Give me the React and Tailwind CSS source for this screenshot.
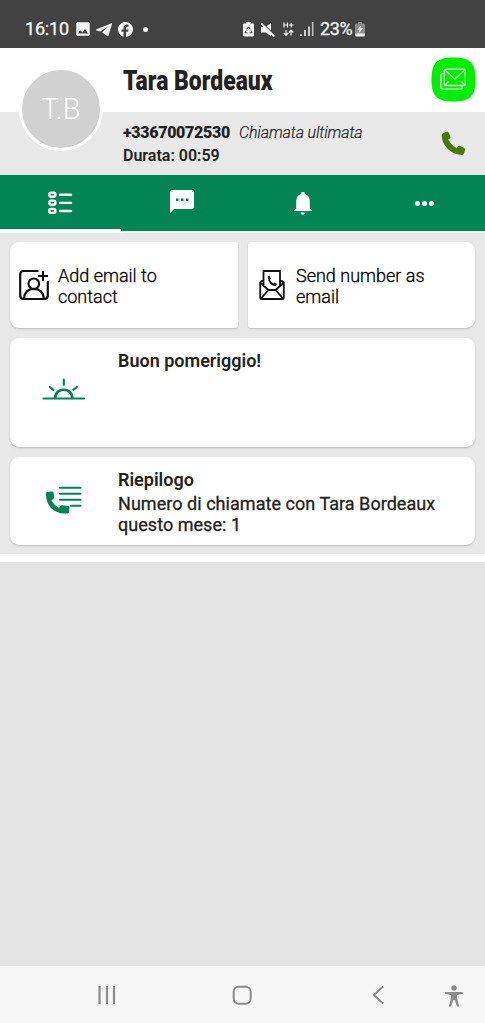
import { MdImage } from "react-icons/md";

function StatusBar() {
  return (
    <div className="flex h-12 items-start bg-[#424242] text-[18px] leading-[18px] text-[#f3f3f3]">
      <span className="mt-5 ml-[25px] w-[44px] tracking-[-0.2px] whitespace-nowrap [-webkit-text-stroke:0.3px]">16:10</span>
      <MdImage className="mt-[20px] ml-[5px] size-[18px]" />
      <svg className="mt-[23px] ml-[4px] h-[14px] w-[16px]" viewBox="0 0 16 14" fill="currentColor">
        <path d="M15.500.2.5 6.300c-.7.300-.6.900 0 1.100l3.800 1.200L12.600 3 6.300 9.200l-.1.200 4.900 3.700c.7.500 1.300.2 1.500-.6L16 .9c.1-.6-.1-.9-.5-.7Z" />
      </svg>
      <svg className="mt-[22px] ml-[6px] size-[15px]" viewBox="0 0 24 24" fill="currentColor">
        <path d="M24 12a12 12 0 1 0-15.200 11.500v-8H5.700V12h3.100V9.800c0-3.700 2.200-5.700 5.400-5.700 1.100 0 2.700.3 2.700.3v3h-1.700c-2 0-2.300 1-2.300 2.200V12h3.800l-.6 3.500h-3.200v8.400A12 12 0 0 0 24 12Z" />
      </svg>
      <span className="mt-[27px] ml-[10px] size-[5px] rounded-full bg-current" />
      <svg className="mt-[22px] ml-[95px] h-[15px] w-[11px]" viewBox="0 0 11 15">
        <path d="M3 0h5v1.600h2q1 0 1 1V13q0 1.600-1.600 1.600H1.600Q0 14.600 0 13V2.600q0-1 1-1h2Z" fill="currentColor" />
        <path d="m3.600 7.300 1.900-2.500 1.900 2.500M8 8.500l1 2.300H6.500M4.500 10.800H2l1-2.300" fill="none" stroke="#424242" strokeWidth="1" />
      </svg>
      <svg className="mt-[23px] ml-[7px] size-[14px]" viewBox="0 0 14 14">
        <path d="M0 4h4.500L10 0v13L4.500 9.500H0Z" fill="currentColor" />
        <path d="m1.500 0 13 13" stroke="#424242" strokeWidth="1.300" />
        <path d="m.3.500 13 13" stroke="currentColor" strokeWidth="1.900" />
      </svg>
      <svg className="mt-[22px] ml-[8px] h-[15px] w-[11px]" viewBox="0 0 11 15" fill="none" stroke="currentColor" strokeWidth="1.200">
        <path d="M1 .5v5M4.500.5v5M1 3h3.500M6 3h4.500M8.200.8v4.400M3 8v5M.8 11 3 13.300 5.200 11M8 13.500V8.300M5.800 10.500 8 8.200l2.300 2.300" />
      </svg>
      <svg className="mt-[22px] ml-[6px] h-[14px] w-[14px]" viewBox="0 0 14 14" stroke="currentColor" strokeWidth="1.600">
        <path d="M1 12.200V14M5 8v6M9 4.500V14" />
        <path d="M12.700 0v14" opacity=".7" />
      </svg>
      <span className="mt-5 ml-[6px] w-[33px] tracking-[-0.4px] whitespace-nowrap [-webkit-text-stroke:0.3px]">23%</span>
      <svg className="mt-[22px] ml-[2px] h-[15px] w-[10px]" viewBox="0 0 10 15">
        <path d="M3 0h4v1.500h1.500q1.500 0 1.500 1.500V12H0V3q0-1.500 1.500-1.500H3Z" fill="#8b8b8b" />
        <path d="M0 11.500h10V13q0 1.500-1.500 1.500h-7Q0 14.500 0 13ZM5.700 3.500 2 8.300h2.300L4 11l4-4.800H5.500Z" fill="currentColor" />
      </svg>
    </div>
  );
}

function Header() {
  return (
    <header className="relative">
      <div className="flex h-16 justify-between bg-white pr-[9px] pl-[123px]">
        <h1 className="mt-[17px] origin-left scale-x-[0.85] text-[27px] leading-8 font-black whitespace-nowrap">
          Tara Bordeaux
        </h1>
        <svg className="mt-[9px] h-[45px] w-[45px]" viewBox="0 0 45 45" fill="none">
          <path d="M22.500.5C39 .5 44.500 6 44.500 22.500S39 44.500 22.500 44.500.5 39 .5 22.500 6 .5 22.500.5Z" fill="#00ee00" />
          <g stroke="#c9ffc9" strokeWidth="1.400" strokeLinejoin="round">
            <rect x="13.300" y="12.300" width="21" height="16.200" rx="1.500" />
            <path d="m13.800 13 10 9 10-9M14 28l3.500-3.500M33.800 28l-3.500-3.500M13.300 16.500h-1.500q-2 0-2 2V30q0 2.200 2.200 2.200h17q2 0 2-2v-1.600" />
          </g>
        </svg>
      </div>
      <div className="flex h-[63px] justify-between bg-[#e8e8e8] pt-[9px] pr-[19px] pl-[123px]">
        <div className="text-[16px] leading-[23px] whitespace-nowrap">
          <div className="flex">
            <span className="w-[116px] font-black tracking-[-0.3px]">+33670072530</span>
            <span className="font-light tracking-[-0.12px] italic [-webkit-text-stroke:0.2px]">Chiamata ultimata</span>
          </div>
          <div className="font-semibold">Durata: 00:59</div>
        </div>
        <svg className="mt-[10px] h-[25px] w-[25px]" viewBox="0 0 25 25" fill="#4b780c">
          <path d="M2 2.200 5.500.7q1.400-.5 2.100.8l1.800 3.700q.5 1.200-.4 2L7.200 8.800q2.700 5 8.100 8.300l1.700-1.700q1-.9 2.200-.3l4 2q1.400.8.900 2.200L22.900 22.600q-.5 1.300-1.900 1.400C9 23.500.5 13.500.7 4.100Q.8 2.700 2 2.200Z" />
        </svg>
      </div>
      <div className="absolute top-[19px] left-[19px] flex size-[84px] items-center justify-center rounded-full border-[3px] border-white bg-[#d1d1d1] pt-0.5 text-[29px] font-light text-white">
        T.B
      </div>
    </header>
  );
}

function Tabs() {
  return (
    <nav className="grid h-[58px] grid-cols-4 border-b-2 border-[#f5faf8] bg-[#028456]">
      <div className="-mb-0.5 flex justify-center border-b-4 border-white">
        <svg className="mt-4 mr-px h-[24px] w-[26px]" viewBox="0 0 26 24" fill="none" stroke="white" strokeWidth="2.400">
          <rect x="2.200" y="1.800" width="6.200" height="4" rx="2" />
          <rect x="2.200" y="9.800" width="6.200" height="4" rx="2" />
          <rect x="2.200" y="17.900" width="6.200" height="4" rx="2" />
          <path d="M13 3.800h11M13 11.900h11M13 20h11" strokeLinecap="round" />
        </svg>
      </div>
      <div className="flex justify-center">
        <svg className="mt-[15px] h-6 w-6" viewBox="0 0 24 24">
          <path d="M2 0h20q2 0 2 2v15q0 2-2 2H4l-4 4.500V2Q0 0 2 0Z" fill="white" />
          <path d="M6 8.500h2.500V11H6Zm5 0h2.500V11H11Zm5 0h2.500V11H16Z" fill="#028456" />
        </svg>
      </div>
      <div className="flex justify-center">
        <svg className="mt-[17px] h-[23px] w-[18px]" viewBox="0 0 18 23" fill="white">
          <path d="M7.200 2V1.600a1.800 1.800 0 0 1 3.600 0V2q5 1.400 5 7v7.700L18 18.200v.8H0v-.8l2.200-1.500V9q0-5.600 5-7ZM6.500 20.400h5q-.3 2.300-2.500 2.300t-2.500-2.300Z" />
        </svg>
      </div>
      <div className="flex justify-center gap-[2px] pt-[26px]">
        <span className="size-[5px] rounded-full bg-white" />
        <span className="size-[5px] rounded-full bg-white" />
        <span className="size-[5px] rounded-full bg-white" />
      </div>
    </nav>
  );
}

function ContactIcon() {
  return (
    <svg className="mt-[26px] h-[32px] w-[31px] shrink-0" viewBox="0 0 31 32" fill="none" stroke="#111" strokeWidth="2.200">
      <path d="M19.500 3H4.500Q1.200 3 1.200 6.500v21Q1.200 31 4.700 31h20.600q3.500 0 3.500-3.500V13M24 3v10M19 8h10" />
      <circle cx="14.800" cy="15.800" r="5.300" />
      <path d="M5 30.500q.8-9.600 9.900-9.600t9.900 9.600" />
    </svg>
  );
}

function EnvelopeIcon() {
  return (
    <svg className="mt-[26px] h-[32px] w-[26px] shrink-0" viewBox="0 0 26 32" fill="none" stroke="#111" strokeWidth="1.800">
      <path d="M4.500 18V3h16.500v15M4.500 11.500 1.200 14.500v14.700q0 1.800 1.800 1.800h20q1.800 0 1.800-1.800V14.500L21 11.500M1.500 15 9.500 22h7l8-7M2 30.500l7.500-8.500M24 30.500l-7.500-8.500" />
      <path d="m8.500 8.500 1.700-1.100 1.700 3-1.200 1.100q1.200 2.500 3.600 3.900l1.100-1 2.700 1.600-1.200 2Q10 18.300 8.500 8.500Z" fill="#111" stroke="none" />
    </svg>
  );
}

function Cards() {
  return (
    <main className="flex h-[321px] flex-col gap-[10px] bg-[#e8e8e8] px-[10px] pt-[9px] text-[18px] leading-[21px]">
      <div className="flex h-[86px] gap-[10px] text-black">
        <div className="flex w-[228px] rounded-l-[9px] rounded-r-[3px] bg-white pl-[9px] shadow-[0_1px_2px_#0003]">
          <ContactIcon />
          <p className="mt-[23px] ml-2 w-[130px] font-light [-webkit-text-stroke:0.3px]">Add email to<br />contact</p>
        </div>
        <div className="flex w-[227px] rounded-l-[3px] rounded-r-[9px] bg-white pl-[11px] shadow-[0_1px_2px_#0003]">
          <EnvelopeIcon />
          <p className="mt-[23px] ml-[11px] w-[150px] font-light [-webkit-text-stroke:0.3px]">Send number as<br />email</p>
        </div>
      </div>
      <div className="flex h-[109px] rounded-[9px] bg-white shadow-[0_1px_2px_#0003]">
        <div className="w-[108px] pt-[40px] pl-[32px]">
          <svg className="h-[24px] w-[44px]" viewBox="0 0 44 24" fill="none" stroke="#028456" strokeWidth="2.200" strokeLinecap="round">
            <path d="M1.500 20.500h40.500M21.800 1.700v5M7.800 9l3.700 2.800M34.800 9l-3.500 2.800" />
            <path d="M13.200 20c0-11 17-11 17 0" strokeWidth="2.700" />
          </svg>
        </div>
        <h2 className="mt-[12px] font-semibold">Buon pomeriggio!</h2>
      </div>
      <div className="flex h-[88px] rounded-[9px] bg-white shadow-[0_1px_2px_#0003]">
        <div className="w-[108px] pt-[28px] pl-[35px]">
          <svg className="h-[30px] w-[37px]" viewBox="0 0 37 30">
            <path d="M15 2.800h20.500M15 8.800h20.500M15 14.800h20.500M26 20.800h9.500" stroke="#028456" strokeWidth="2.100" strokeLinecap="round" />
            <path d="m2 7 5-.5q1.300 0 1.600 1.300l.6 4.600q0 1-1.300 1.900l-1.500 1.200q2.800 4.800 7.600 7.300l2-2q.7-.7 1.800-.6l5.100.9q1.500.3 1.500 1.600l-.2 4.300q-.2 1.300-1.700 1.400C10.400 30 .6 21.500 1 8.500Q1 7.200 2 7Z" fill="#028456" />
          </svg>
        </div>
        <div className="pt-[12px] whitespace-nowrap">
          <h2 className="mb-[3px] font-semibold">Riepilogo</h2>
          <p className="tracking-[0.04px] [-webkit-text-stroke:0.3px]">Numero di chiamate con Tara Bordeaux<br />questo mese: 1</p>
        </div>
      </div>
    </main>
  );
}

function NavBar() {
  return (
    <footer className="flex h-[57px] items-center bg-[#f6f6f6] text-[#8b8b8b]">
      <svg className="ml-[97px] h-[20px] w-[20px]" viewBox="0 0 20 20" fill="none" stroke="currentColor" strokeWidth="2.200">
        <path d="M2.500 1v18M10 1v18M17 1v18" />
      </svg>
      <svg className="ml-[115px] size-[20px]" viewBox="0 0 20 20" fill="none" stroke="currentColor" strokeWidth="2">
        <rect x="1.700" y="1.700" width="17" height="17" rx="5" />
      </svg>
      <svg className="ml-[120px] h-[20px] w-[12px]" viewBox="0 0 12 20" fill="none" stroke="currentColor" strokeWidth="2">
        <path d="m11 1.500-9 8.500 9 8.500" />
      </svg>
      <svg className="mt-[2px] ml-[61px] h-[22px] w-[18px]" viewBox="0 0 18 22" fill="currentColor">
        <circle cx="9" cy="3" r="2.700" />
        <path d="M.8 7h16.500q.7 0 .7 1t-.7 1L12 10v3l2.200 8.500h-2.200L9.700 15H8.400L6 21.500H3.800L6 13v-3L.8 9Q0 9 0 8t.8-1Z" />
      </svg>
    </footer>
  );
}

export default function App() {
  return (
    <div className="flex h-[1023px] w-[485px] flex-col overflow-hidden bg-[#e4e4e4] font-['Roboto',sans-serif] text-[#222]">
      <StatusBar />
      <Header />
      <Tabs />
      <Cards />
      <div className="h-2 bg-white" />
      <div className="flex-1" />
      <NavBar />
    </div>
  );
}
